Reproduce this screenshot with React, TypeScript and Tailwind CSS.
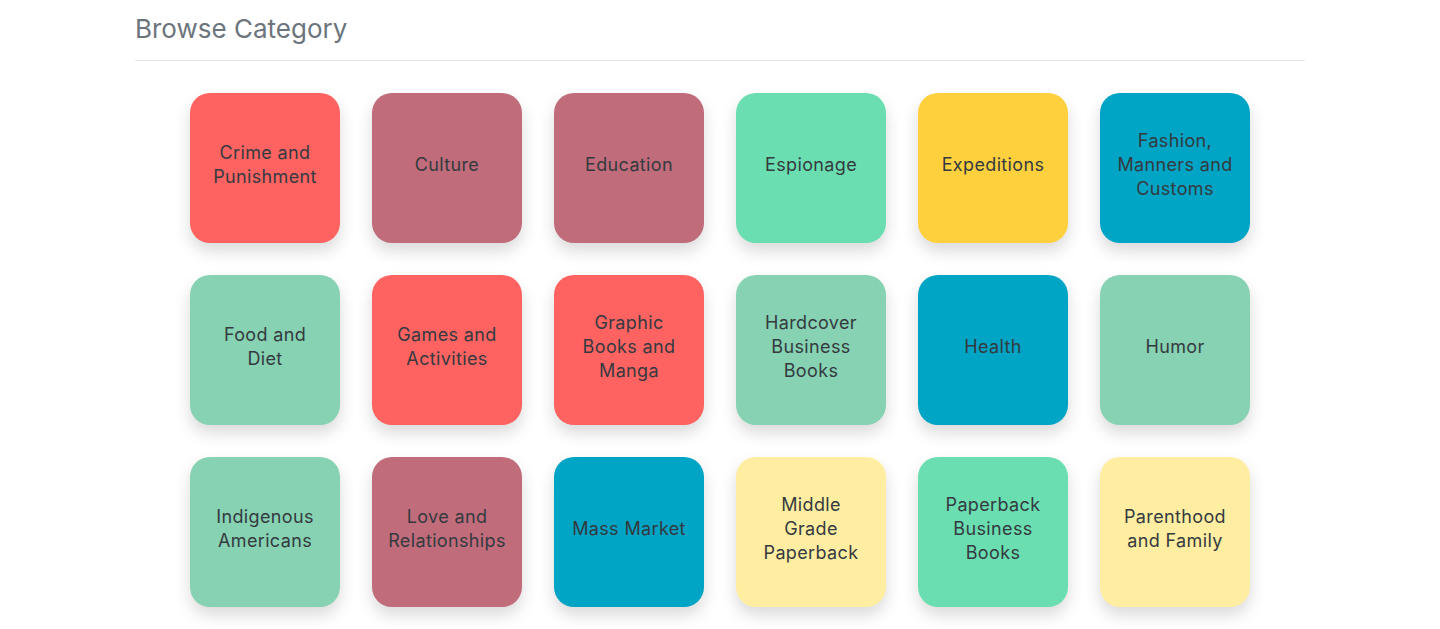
const categories = [
  { name: "Crime and Punishment", color: "bg-[#ff6361]" },
  { name: "Culture", color: "bg-[#c06c7a]" },
  { name: "Education", color: "bg-[#c06c7a]" },
  { name: "Espionage", color: "bg-[#6adeb0]" },
  { name: "Expeditions", color: "bg-[#ffd03d]" },
  { name: "Fashion, Manners and Customs", color: "bg-[#00a4c4]" },
  { name: "Food and Diet", color: "bg-[#86d2b2]" },
  { name: "Games and Activities", color: "bg-[#ff6361]" },
  { name: "Graphic Books and Manga", color: "bg-[#ff6361]" },
  { name: "Hardcover Business Books", color: "bg-[#86d2b2]" },
  { name: "Health", color: "bg-[#00a4c4]" },
  { name: "Humor", color: "bg-[#86d2b2]" },
  { name: "Indigenous Americans", color: "bg-[#86d2b2]" },
  { name: "Love and Relationships", color: "bg-[#c06c7a]" },
  { name: "Mass Market", color: "bg-[#00a4c4]" },
  { name: "Middle Grade Paperback", color: "bg-[#ffeea1]" },
  { name: "Paperback Business Books", color: "bg-[#6adeb0]" },
  { name: "Parenthood and Family", color: "bg-[#ffeea1]" },
];

export default function App() {
  return (
    <div className="min-h-screen bg-white font-['Inter',sans-serif]">
      <div className="mx-auto w-[1170px]">
        <h2 className="pt-[12px] pb-[14px] text-[26px] leading-[34px] font-normal text-[#6c757d]">
          Browse Category
        </h2>
        <div className="border-t border-[#e5e5e5]" />
        <div className="mt-[32px] flex justify-center">
          <div className="grid grid-cols-6 gap-[32px]">
            {categories.map((c) => (
              <div
                key={c.name}
                className={`${c.color} flex h-[150px] w-[150px] items-center justify-center rounded-[20px] px-[16px] pb-[6px] text-center text-[18px] leading-[24px] tracking-[0.02em] text-[#343a40] shadow-[0_8px_16px_rgba(0,0,0,0.15)]`}
              >
                {c.name}
              </div>
            ))}
          </div>
        </div>
      </div>
    </div>
  );
}
